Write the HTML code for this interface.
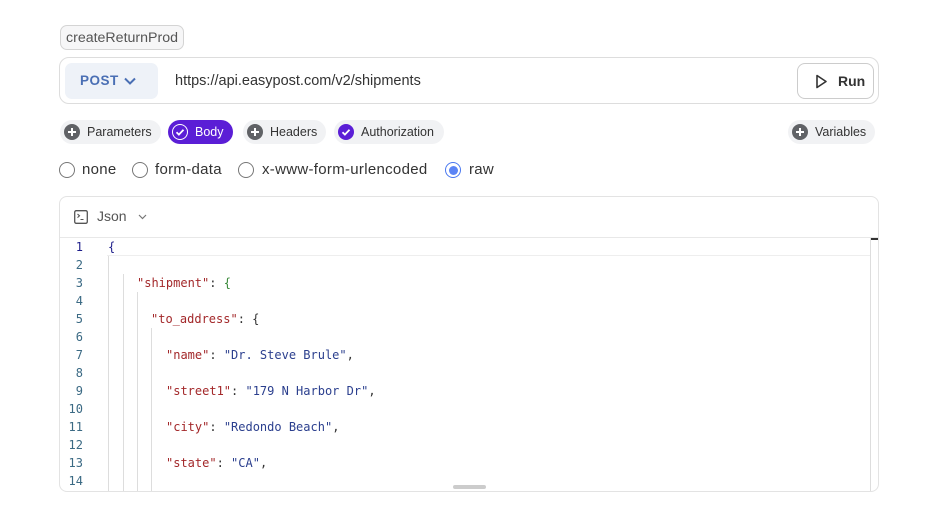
<!DOCTYPE html>
<html><head><meta charset="utf-8"><style>
*{box-sizing:border-box;margin:0;padding:0}
body{width:937px;height:528px;background:#fff;font-family:"Liberation Sans",sans-serif;color:#333;position:relative;overflow:hidden}
.abs{position:absolute}
.tag{left:60px;top:25px;height:25px;padding:0 5px;border:1px solid #d4d4d4;border-radius:7px;background:#f6f6f7;font-size:14.2px;line-height:24px;color:#555}
.bar{left:59px;top:57px;width:820px;height:47px;border:1px solid #ddd;border-radius:10px}
.method{left:5px;top:5px;width:93px;height:36px;background:#eef2f8;border-radius:7px;color:#4a6fb4;font-weight:bold;font-size:13.5px;line-height:36px;padding-left:15px;letter-spacing:.5px}
.url{left:115px;top:15px;font-size:14.5px;color:#333}
.run{right:4px;top:5px;width:77px;height:36px;border:1px solid #ccc;border-radius:8px;font-weight:bold;font-size:14px;line-height:34px;color:#333}
.pill{top:120px;height:24px;border-radius:12px;background:#f1f2f4;font-size:12.5px;line-height:24px;padding-left:27px;padding-right:9px;color:#333}
.pill .ic{position:absolute;left:4px;top:4px;width:16px;height:16px;border-radius:50%;background:#606266}
.pill.on{background:#5b1ed6;color:#fff}
.radio{top:162px;width:16px;height:16px;border:1.3px solid #777;border-radius:50%}
.rl{top:161px;font-size:15px;color:#333;letter-spacing:.3px}
.ed{left:59px;top:196px;width:820px;height:296px;border:1px solid #e3e3e3;border-radius:8px;overflow:hidden}
.code{font-family:"DejaVu Sans Mono",monospace;font-size:12px}
.ln{position:absolute;left:0;width:23px;text-align:right;color:#3b6a84;font-size:12px}
.k{color:#a3282a}.s{color:#2b3f8e}.p{color:#333}
.g{position:absolute;width:1px;background:#ddd}
</style></head><body>
<div class="abs tag">createReturnProd</div>
<div class="abs bar">
 <div class="abs method">POST <svg style="position:absolute;left:59px;top:13px" width="12" height="10" viewBox="0 0 12 10"><path d="M1 2.5 L6 7.5 L11 2.5" fill="none" stroke="#4a6fb4" stroke-width="2"/></svg></div>
 <div class="abs url">https://api.easypost.com/v2/shipments</div>
 <div class="abs run"><svg style="position:absolute;left:17px;top:10px" width="13" height="15" viewBox="0 0 13 15"><path d="M2 1.5 L11 7.5 L2 13.5 Z" fill="none" stroke="#333" stroke-width="1.6" stroke-linejoin="round"/></svg><span style="position:absolute;left:40px">Run</span></div>
</div>

<div class="abs pill" style="left:60px"><span class="ic"><svg width="16" height="16"><path d="M8 4v8M4 8h8" stroke="#fff" stroke-width="2"/></svg></span>Parameters</div>
<div class="abs pill on" style="left:168px"><span class="ic" style="background:#fff"><svg width="16" height="16"><circle cx="8" cy="8" r="7" fill="#5b1ed6"/><path d="M4.5 8.2l2.4 2.4 4.6-4.8" fill="none" stroke="#fff" stroke-width="1.8"/></svg></span>Body</div>
<div class="abs pill" style="left:243px"><span class="ic"><svg width="16" height="16"><path d="M8 4v8M4 8h8" stroke="#fff" stroke-width="2"/></svg></span>Headers</div>
<div class="abs pill" style="left:334px;padding-right:10px"><span class="ic" style="background:#5b1ed6"><svg width="16" height="16"><path d="M4.5 8.2l2.4 2.4 4.6-4.8" fill="none" stroke="#fff" stroke-width="1.8"/></svg></span>Authorization</div>
<div class="abs pill" style="left:788px"><span class="ic"><svg width="16" height="16"><path d="M8 4v8M4 8h8" stroke="#fff" stroke-width="2"/></svg></span>Variables</div>

<div class="abs radio" style="left:59px"></div><div class="abs rl" style="left:82px">none</div>
<div class="abs radio" style="left:132px"></div><div class="abs rl" style="left:155px">form-data</div>
<div class="abs radio" style="left:238px"></div><div class="abs rl" style="left:262px">x-www-form-urlencoded</div>
<div class="abs radio" style="left:445px;border-color:#4a78f0"><div style="position:absolute;left:2.5px;top:2.5px;width:9px;height:9px;border-radius:50%;background:#5b84f5"></div></div><div class="abs rl" style="left:469px">raw</div>

<div class="abs ed">
 <svg class="abs" style="left:14px;top:13px" width="14" height="14" viewBox="0 0 14 14"><rect x=".7" y=".7" width="12.6" height="12.6" rx="1.5" fill="none" stroke="#555" stroke-width="1.3"/><path d="M3.5 4l2 1.8-2 1.8M6.5 9.5h3" fill="none" stroke="#555" stroke-width="1.1"/></svg>
 <div class="abs" style="left:37px;top:11px;font-size:14px;color:#555">Json</div>
 <svg class="abs" style="left:78px;top:17px" width="9" height="6"><path d="M1 1l3.5 3.5L8 1" fill="none" stroke="#777" stroke-width="1.2"/></svg>
 <div class="abs" style="left:0;top:40px;width:820px;height:1px;background:#e8e8e8"></div>
 <div class="abs" style="left:47px;top:41px;width:763px;height:18px;border-bottom:1px solid #eee"></div>
 <div class="abs" style="left:810px;top:41px;width:1px;height:254px;background:#ddd"></div>
 <div class="abs" style="left:811px;top:41px;width:7px;height:2px;background:#333"></div>
 <div class="abs" style="left:393px;top:288px;width:33px;height:4px;border-radius:2px;background:#ccc"></div>
 <div class="g" style="left:48px;top:59px;height:235px"></div>
 <div class="g" style="left:63px;top:77px;height:217px"></div>
 <div class="g" style="left:77px;top:95px;height:199px"></div>
 <div class="g" style="left:91px;top:131px;height:163px"></div>
 <div class="code">
  <div class="ln" style="top:43px;color:#1d1d8a">1</div><div class="abs" style="left:48px;top:43px;color:#1d1d8a">{</div>
  <div class="ln" style="top:61px">2</div>
  <div class="ln" style="top:79px">3</div><div class="abs" style="left:77px;top:79px"><span class="k">"shipment"</span><span class="p">: </span><span style="color:#3a8a3a">{</span></div>
  <div class="ln" style="top:97px">4</div>
  <div class="ln" style="top:115px">5</div><div class="abs" style="left:91px;top:115px"><span class="k">"to_address"</span><span class="p">: {</span></div>
  <div class="ln" style="top:133px">6</div>
  <div class="ln" style="top:151px">7</div><div class="abs" style="left:106px;top:151px"><span class="k">"name"</span>: <span class="s">"Dr. Steve Brule"</span>,</div>
  <div class="ln" style="top:169px">8</div>
  <div class="ln" style="top:187px">9</div><div class="abs" style="left:106px;top:187px"><span class="k">"street1"</span>: <span class="s">"179 N Harbor Dr"</span>,</div>
  <div class="ln" style="top:205px">10</div>
  <div class="ln" style="top:223px">11</div><div class="abs" style="left:106px;top:223px"><span class="k">"city"</span>: <span class="s">"Redondo Beach"</span>,</div>
  <div class="ln" style="top:241px">12</div>
  <div class="ln" style="top:259px">13</div><div class="abs" style="left:106px;top:259px"><span class="k">"state"</span>: <span class="s">"CA"</span>,</div>
  <div class="ln" style="top:277px">14</div>
 </div>
</div>
</body></html>
